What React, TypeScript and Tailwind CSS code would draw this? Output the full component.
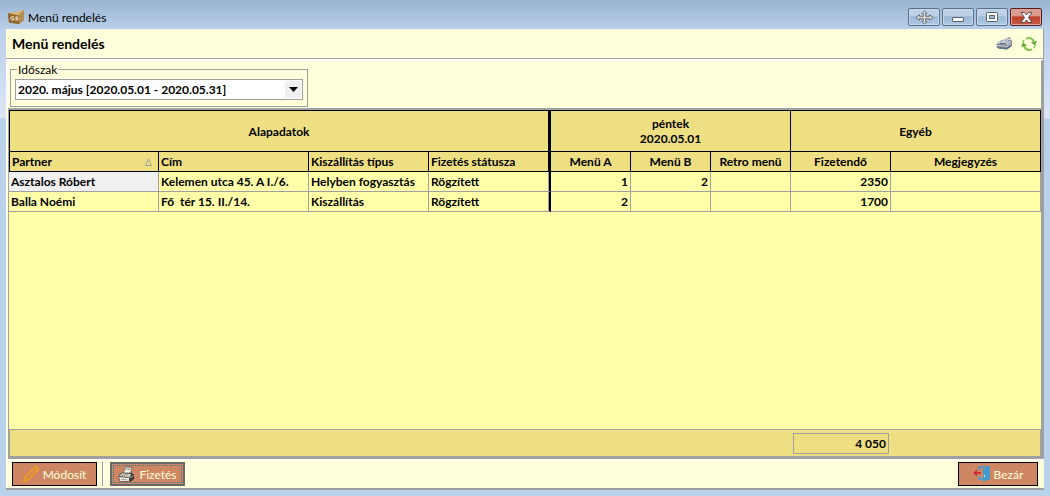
import type { ReactNode } from 'react';

const PERIODS = ['2020. május [2020.05.01 - 2020.05.31]'];

const ORDERS = [
  {
    partner: 'Asztalos Róbert',
    address: 'Kelemen utca 45. A I./6.',
    delivery: 'Helyben fogyasztás',
    status: 'Rögzített',
    menuA: '1',
    menuB: '2',
    retro: '',
    total: '2350',
    note: '',
  },
  {
    partner: 'Balla Noémi',
    address: 'Fő  tér 15. II./14.',
    delivery: 'Kiszállítás',
    status: 'Rögzített',
    menuA: '2',
    menuB: '',
    retro: '',
    total: '1700',
    note: '',
  },
];

function LogoIcon() {
  return (
    <svg width="16" height="16" viewBox="0 0 16 16" aria-hidden="true">
      <path d="M0 4 10 4.500 15.500 1V11.500L11 15 1 13.500z" fill="#8a6630" />
      <path d="M0 4.500 11 5.500V15L1 13.500z" fill="#94682d" />
      <path d="M0 4 9 3 15.500 .5 15 4.500 11 6.500z" fill="#d8b577" />
      <path d="M11 5.500 15.500 1.500V11.500L11 15z" fill="#b58d4c" />
      <path
        d="M6 7.800H4Q2.800 7.800 2.800 9.300T4 11H5.800V9.500H4.600M10.300 8H7.800v1.400h2.200V11H7.300"
        fill="none"
        stroke="#f5e7c8"
      />
    </svg>
  );
}

function MoveIcon() {
  return (
    <svg width="19" height="15" viewBox="0 0 19 15" aria-hidden="true">
      <path
        d="M9.500 .8 12 3.500H10.700V6.300h3.800V4.800l3.700 2.700-3.700 2.700V8.700h-3.800v2.800H12l-2.500 2.700L7 11.500h1.300V8.700H4.500v1.500L.8 7.500 4.500 4.800v1.500h3.800V3.500H7z"
        fill="#ddd9d0"
        stroke="#6a717b"
      />
    </svg>
  );
}

function MinimizeIcon() {
  return (
    <svg width="12" height="12" viewBox="0 0 12 12" aria-hidden="true">
      <rect x=".5" y="6.500" width="11" height="4" rx=".5" fill="#fff" stroke="#59616d" />
    </svg>
  );
}

function MaximizeIcon() {
  return (
    <svg width="12" height="10" viewBox="0 0 12 10" aria-hidden="true">
      <rect x=".5" y=".5" width="11" height="9" rx="1" fill="#fff" stroke="#59616d" />
      <rect x="3.500" y="3.500" width="5" height="3" fill="#9fb9d6" stroke="#59616d" />
    </svg>
  );
}

function CloseIcon() {
  return (
    <svg width="13" height="11" viewBox="0 0 13 11" aria-hidden="true">
      <path
        d="M1 .5H4.500L6.500 3 8.500 .5H12L8.500 5.500 12 10.500H8.500L6.500 8 4.500 10.500H1L4.500 5.500z"
        fill="#fff"
        stroke="#5d4a55"
      />
    </svg>
  );
}

function PrinterIcon() {
  return (
    <svg width="17" height="15" viewBox="0 0 17 15" aria-hidden="true">
      <path d="M.5 8 5 4.500 13 2.500 16 5V10L11 13.500 1 12z" fill="#75798c" />
      <path d="M1 7.500 6 4.500 15.500 5 11.500 9z" fill="#c5c9d3" />
      <path d="M6 4.500 12.500 1l2.500 1-2.500 4z" fill="#8e92a8" />
      <path d="M7 4.800 12.500 1.800M9.500 5.300l4.500-2.500" stroke="#e3e6ed" fill="none" />
      <path d="M1 9.500 11 10.500l4.500-3.500" stroke="#dcdfe6" fill="none" />
      <path d="M2 12 10.500 13 14.500 10.500" stroke="#447b7b" fill="none" />
      <path d="M4 7.300 10.500 7.800" stroke="#62677a" fill="none" />
    </svg>
  );
}

function RefreshIcon() {
  return (
    <svg width="16" height="16" viewBox="0 0 16 16" aria-hidden="true">
      <g fill="none" stroke="#84c350" strokeWidth="2">
        <path d="M5 2.700Q10.500 .3 13 6" />
        <path d="M11 13.300Q5.500 15.700 3 10" />
        <path d="M1.800 7Q2 4.800 3.300 3.700" strokeWidth="1.300" />
        <path d="M14.200 9Q14 11.200 12.700 12.300" strokeWidth="1.300" />
      </g>
      <path d="M10 6.500 16 5 14 9.500z" fill="#62aa2e" />
      <path d="M6 9.500 0 11 2 6.500z" fill="#62aa2e" />
    </svg>
  );
}

function PencilIcon() {
  return (
    <svg width="16" height="16" viewBox="0 0 16 16" fill="none" stroke="#f5a20c" aria-hidden="true">
      <path d="M.8 15.200 2 11 12 1.300Q13 .5 14.300 1.700T14.700 4L5 14z" strokeWidth="1.300" />
      <path d="M2 11 5 14M11 2.300 13.800 5" />
    </svg>
  );
}

function RegisterIcon() {
  return (
    <svg width="17" height="16" viewBox="0 0 17 16" aria-hidden="true">
      <path d="M1 9 4 6.500H13l3 2V13l-3 2.500H2L.5 13z" fill="#393936" />
      <path d="M1 10 4.500 7 13 8 11.500 11.500z" fill="#d8d6cb" />
      <path d="M1 11 11 12v3H2z" fill="#eeece2" />
      <path d="M5.500 6 8 .8 14 1.500 12.500 7 6 7z" fill="#f5f3e9" stroke="#4d4d48" strokeWidth=".7" />
      <path d="M8.500 3 12 3.300" stroke="#77756c" />
      <path d="M5 8 11 9M4 9.500 10 10.300" stroke="#77756c" strokeDasharray="1 1" />
      <path d="M3 13.300 9 13.800" stroke="#a5a397" />
      <path d="M12 12 15.500 9.500" stroke="#b5b2a6" />
    </svg>
  );
}

function ExitIcon() {
  return (
    <svg width="17" height="16" viewBox="0 0 17 16" aria-hidden="true">
      <path d="M6 4V1H16V13H6V10" fill="none" stroke="#3d9bd3" strokeWidth="1.400" />
      <path d="M10 3 16.500 .500V13L10 16z" fill="#3d9bd3" />
      <path d="M11.500 9v2" stroke="#d6edf8" />
      <path d="M0 7 4 3.500V6H8V8H4v2.500z" fill="#d42a3c" />
    </svg>
  );
}

function WindowButton({ label, danger, children }: { label: string; danger?: boolean; children: ReactNode }) {
  return (
    <button
      type="button"
      aria-label={label}
      className={`flex h-[18px] w-8 items-center justify-center rounded-[2px] border ${
        danger
          ? 'border-[#571d27] bg-linear-to-b from-[#dc9c90] from-40% via-[#bd3f2b] via-50% to-[#c65b43] shadow-[inset_0_0_0_1px_#dba298]'
          : 'border-[#57718f] bg-linear-to-b from-[#bdd0e5] from-40% via-[#9db8d5] via-50% to-[#b0c9e4] shadow-[inset_0_0_0_1px_#c6d8ea]'
      }`}
    >
      {children}
    </button>
  );
}

const HEAD = 'h-5 border-r border-b border-black bg-[#eedf82] px-[2px] py-0';
const CELL = 'h-5 border-r border-b border-[#a0a0a0] px-[2px] py-0 whitespace-pre';
const DAY_EDGE = 'border-r-2 border-r-black shadow-[inset_-1px_0_0_#a0a0a0]';
const ACTION = 'flex h-6 items-center justify-center gap-1 bg-[#cf8763] text-[#ffffdc]';

export default function App() {
  return (
    <div className="flex min-h-screen flex-col bg-[linear-gradient(#b9cfe9_29px,#dbe6f4_118px,#b9d1ea_119px)] px-[6px] pb-[6px] font-['Lato','Open_Sans',sans-serif] text-xs leading-[15px] text-black">
      <header className="-mx-[6px] flex h-[29px] items-center gap-1 bg-linear-to-b from-[#99b4d1] to-[#b9cfe8] pt-[5px] pr-2 pl-2">
        <LogoIcon />
        <span className="grow">Menü rendelés</span>
        <div className="flex gap-[2px]">
          <WindowButton label="Mozgatás">
            <MoveIcon />
          </WindowButton>
          <WindowButton label="Kis méret">
            <MinimizeIcon />
          </WindowButton>
          <WindowButton label="Teljes méret">
            <MaximizeIcon />
          </WindowButton>
          <WindowButton label="Ablak bezárása" danger>
            <CloseIcon />
          </WindowButton>
        </div>
      </header>

      <main className="flex grow flex-col border-b-2 border-[#a0a0a0] bg-[#ffffdc]">
        <div className="flex h-[30px] items-center justify-between border-r border-b border-[#a0a0a0] pr-[6px] pl-[6px]">
          <h1 className="text-sm font-bold">Menü rendelés</h1>
          <div className="flex gap-2">
            <button type="button" aria-label="Nyomtatás">
              <PrinterIcon />
            </button>
            <button type="button" aria-label="Frissítés">
              <RefreshIcon />
            </button>
          </div>
        </div>

        <div className="border-t-2 border-r-3 border-l-2 border-white border-r-[#a0a0a0] px-[2px] pt-px pb-px">
          <fieldset className="w-[298px] border border-[#a0a0a0] px-1 pb-[6px]">
            <legend className="ml-[2px] h-[15px] px-px">
              <label htmlFor="period">Időszak</label>
            </legend>
            <div className="relative mt-[2px]">
              <select
                id="period"
                className="block h-[21px] w-full appearance-none border border-[#a0a0a0] bg-white pl-[2px] font-bold"
              >
                {PERIODS.map((period) => (
                  <option key={period}>{period}</option>
                ))}
              </select>
              <span className="pointer-events-none absolute inset-y-[2px] right-[2px] flex w-4 items-center justify-center bg-[#f0f0f0]">
                <svg width="9" height="5" viewBox="0 0 9 5" aria-hidden="true">
                  <path d="M0 0H9L4.500 5z" />
                </svg>
              </span>
            </div>
          </fieldset>
        </div>

        <div className="ml-[2px] flex grow flex-col border-t-2 border-r-3 border-b-3 border-l border-[#a0a0a0] bg-[#ffffaa]">
          <table className="w-full table-fixed border-separate border-spacing-0 text-left font-bold">
            <colgroup>
              <col className="w-[150px]" />
              <col className="w-[150px]" />
              <col className="w-[120px]" />
              <col className="w-[122px]" />
              <col className="w-20" />
              <col className="w-20" />
              <col className="w-20" />
              <col className="w-[100px]" />
              <col />
            </colgroup>
            <thead>
              <tr className="text-center">
                <th colSpan={4} className="h-[42px] border border-r-3 border-black bg-[#eedf82] p-0">
                  Alapadatok
                </th>
                <th colSpan={3} className="border-y border-r border-black bg-[#eedf82] p-0">
                  péntek
                  <br />
                  2020.05.01
                </th>
                <th colSpan={2} className="border-y border-r border-black bg-[#eedf82] p-0">
                  Egyéb
                </th>
              </tr>
              <tr>
                <th className={`${HEAD} border-l`} aria-sort="ascending">
                  <div className="flex items-center justify-between pr-1">
                    Partner
                    <svg width="7" height="8" viewBox="0 0 7 8" fill="none" stroke="#a0a0a0" aria-hidden="true">
                      <path d="M3.500 .8 6.500 7.500H.5z" />
                    </svg>
                  </div>
                </th>
                <th className={HEAD}>Cím</th>
                <th className={HEAD}>Kiszállítás típus</th>
                <th className={`${HEAD} border-r-3`}>Fizetés státusza</th>
                <th className={`${HEAD} text-center`}>Menü A</th>
                <th className={`${HEAD} text-center`}>Menü B</th>
                <th className={`${HEAD} text-center`}>Retro menü</th>
                <th className={`${HEAD} text-center`}>Fizetendő</th>
                <th className={`${HEAD} text-center`}>Megjegyzés</th>
              </tr>
            </thead>
            <tbody>
              {ORDERS.map((order, idx) => (
                <tr key={order.partner}>
                  <td className={`${CELL} ${idx === 0 ? 'bg-[#f0f0f0]' : ''}`}>{order.partner}</td>
                  <td className={CELL}>{order.address}</td>
                  <td className={CELL}>{order.delivery}</td>
                  <td className={`${CELL} ${DAY_EDGE}`}>{order.status}</td>
                  <td className={`${CELL} text-right`}>{order.menuA}</td>
                  <td className={`${CELL} text-right`}>{order.menuB}</td>
                  <td className={`${CELL} text-right`}>{order.retro}</td>
                  <td className={`${CELL} text-right`}>{order.total}</td>
                  <td className={CELL}>{order.note}</td>
                </tr>
              ))}
            </tbody>
          </table>

          {/* Totals strip, lined up with the Fizetendő column */}
          <div className="mt-auto grid h-[27px] grid-cols-[782px_100px_1fr] items-center border border-b-0 border-[#a0a0a0] bg-[#eedf82]">
            <output className="col-start-2 mr-[3px] ml-px h-[21px] border border-[#a0a0a0] pt-[2px] pr-[2px] text-right font-bold">
              4 050
            </output>
          </div>
        </div>

        <div className="flex h-[29px] items-center border-t border-white pr-[6px] pl-[6px]">
          <button type="button" className={`${ACTION} w-[85px] border border-black`}>
            <PencilIcon />
            Módosít
          </button>
          <div className="mr-[6px] ml-[5px] h-6 w-[2px] border-l border-[#a0a0a0] bg-white" />
          <button
            type="button"
            className={`${ACTION} w-[75px] border-2 border-[#696969] outline-1 -outline-offset-4 outline-dotted outline-[#307b9c]`}
          >
            <RegisterIcon />
            Fizetés
          </button>
          <button type="button" className={`${ACTION} ml-auto w-20 border border-black`}>
            <ExitIcon />
            Bezár
          </button>
        </div>
      </main>
    </div>
  );
}
